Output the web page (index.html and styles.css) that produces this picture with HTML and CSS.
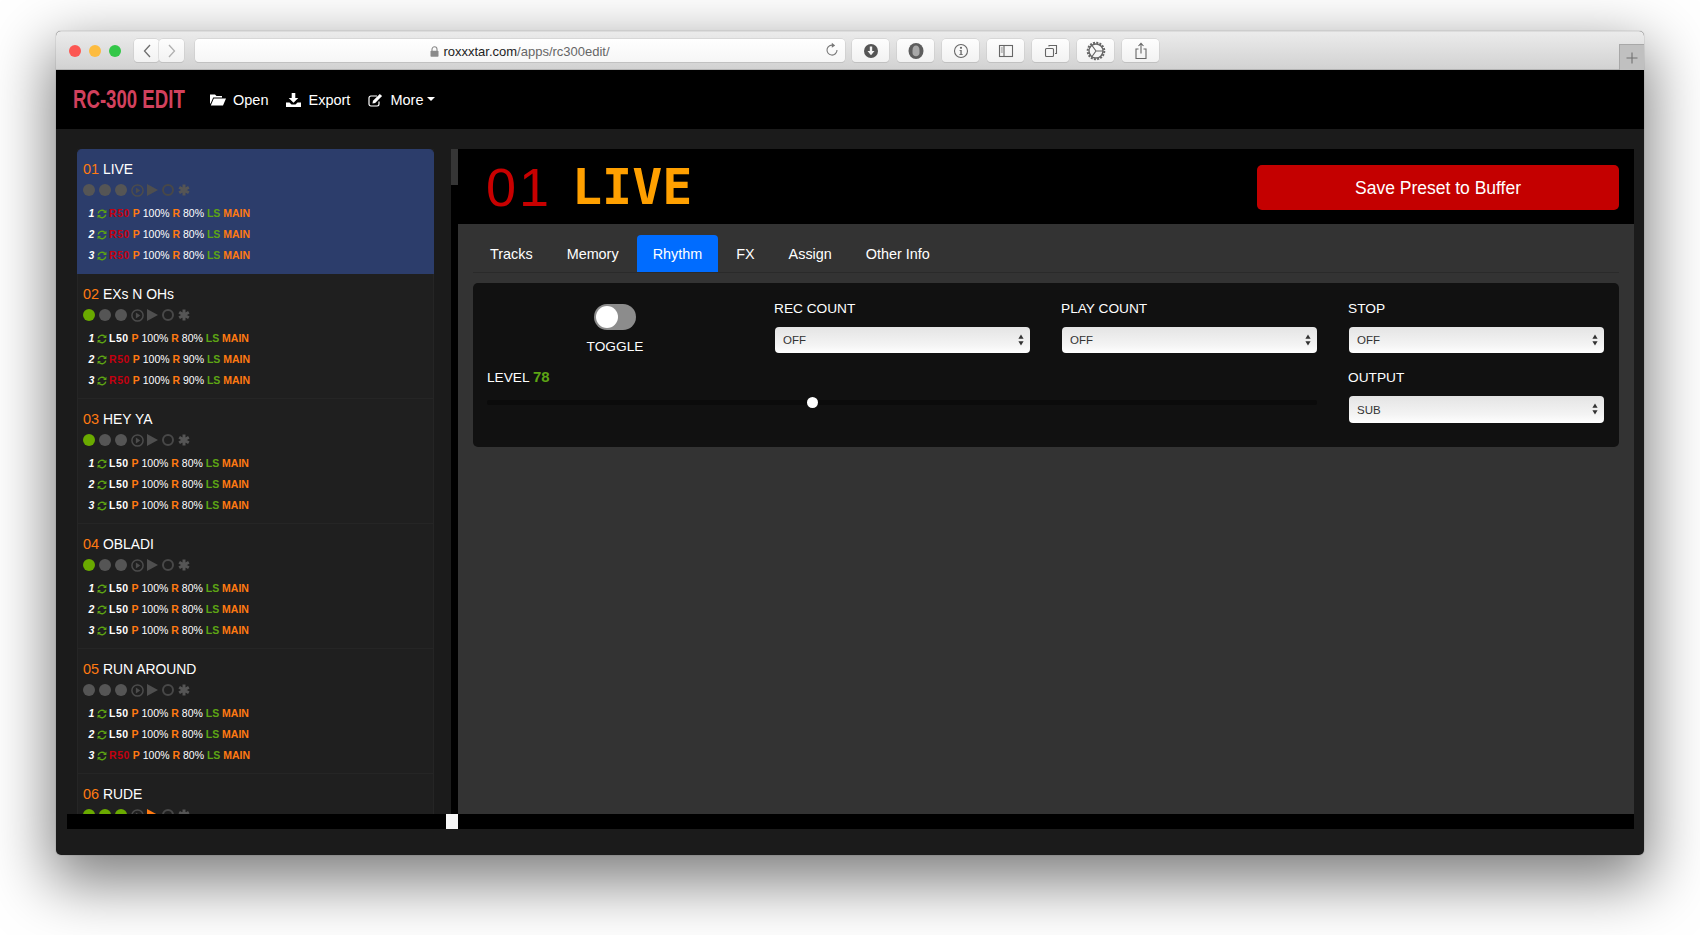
FILE: index.html
```html
<!DOCTYPE html>
<html lang="en">
<head>
<meta charset="utf-8">
<title>RC-300 Edit</title>
<link rel="stylesheet" href="styles.css">
</head>
<body>
<svg class="defs" width="0" height="0" aria-hidden="true">
  <symbol id="sync" viewBox="0 0 12 12">
    <path d="M1.4 5.2A4.7 4.7 0 0 1 9.4 3" fill="none" stroke="currentColor" stroke-width="1.7"/>
    <path d="M11.3 .8v4H7.3z" fill="currentColor"/>
    <path d="M10.6 6.8A4.7 4.7 0 0 1 2.6 9" fill="none" stroke="currentColor" stroke-width="1.7"/>
    <path d="M.7 11.2v-4h4z" fill="currentColor"/>
  </symbol>
  <symbol id="playc" viewBox="0 0 13 13">
    <circle cx="6.5" cy="6.5" r="5.6" fill="none" stroke="currentColor" stroke-width="1.5"/>
    <path d="M4.9 3.6l4.4 2.9-4.4 2.9z" fill="currentColor"/>
  </symbol>
  <symbol id="aster" viewBox="0 0 12 12">
    <path d="M6 .5v11M1.2 3.2l9.6 5.6M10.8 3.2l-9.6 5.6" fill="none" stroke="currentColor" stroke-width="3"/>
  </symbol>
  <symbol id="updown" viewBox="0 0 6 12">
    <path d="M3 .5L5.6 4.8H.4zM3 11.5L.4 7.2h5.2z" fill="currentColor"/>
  </symbol>
</svg>

<main class="window">
  <header class="titlebar">
    <div class="lights">
      <span class="light light-red"></span>
      <span class="light light-yellow"></span>
      <span class="light light-green"></span>
    </div>
    <div class="history">
      <span class="tool tool-hist">
        <svg width="10" height="16" viewBox="0 0 10 16"><path d="M8 2L2.5 8 8 14" fill="none" stroke="#6e6e6e" stroke-width="1.3"/></svg>
      </span>
      <span class="tool tool-hist">
        <svg width="10" height="16" viewBox="0 0 10 16"><path d="M2 2l5.500 6L2 14" fill="none" stroke="#b0b0b0" stroke-width="1.3"/></svg>
      </span>
    </div>
    <div class="urlbar">
      <span class="url-center">
        <svg class="lock" width="9" height="11" viewBox="0 0 9 11"><path d="M2 5V3.300a2.500 2.500 0 0 1 5 0V5" fill="none" stroke="#8a8a8a" stroke-width="1.100"/><rect x=".5" y="4.800" width="8" height="6" rx=".8" fill="#8a8a8a"/></svg>
        <span class="url-host">roxxxtar.com</span><span class="url-path">/apps/rc300edit/</span>
      </span>
      <svg class="reload" width="14" height="16" viewBox="0 0 14 16"><path d="M8.700 3.400A5 5 0 1 0 12 8" fill="none" stroke="#777" stroke-width="1.100"/><path d="M6.800 .8l3.400 2.600-3.400 2.300z" fill="#777"/></svg>
    </div>
    <div class="tools">
      <span class="tool">
        <svg width="16" height="16" viewBox="0 0 16 16"><circle cx="8" cy="8" r="7" fill="#555"/><path d="M6.800 3.500h2.400V8h2.300L8 12.300 4.500 8h2.300z" fill="#f4f4f4"/></svg>
      </span>
      <span class="tool">
        <svg width="18" height="18" viewBox="0 0 18 18"><ellipse cx="9" cy="9" rx="7.500" ry="8" fill="#5d5d5d"/><path d="M5.500 8.500c0-3.500 1.500-5 3.500-5s3.500 1.500 3.500 5v2.500c0 2-1.500 3.200-3.500 3.200s-3.500-1.200-3.500-3.200z" fill="#a8a8a8"/></svg>
      </span>
      <span class="tool">
        <svg width="16" height="16" viewBox="0 0 16 16"><circle cx="8" cy="8" r="6.500" fill="none" stroke="#666" stroke-width="1.100"/><circle cx="8" cy="4.800" r="1.100" fill="#666"/><path d="M6.500 7h2.200v4.200h1.100v.8H6.300v-.8h1.100V7.800H6.500z" fill="#666"/></svg>
      </span>
      <span class="tool">
        <svg width="16" height="14" viewBox="0 0 16 14"><rect x="1.500" y="1.500" width="13" height="11" fill="none" stroke="#666" stroke-width="1.100"/><path d="M6 1.500v11" stroke="#666" stroke-width="1.100"/><path d="M2.800 4h2M2.800 6h2M2.800 8h2" stroke="#888"/></svg>
      </span>
      <span class="tool">
        <svg width="14" height="14" viewBox="0 0 14 14"><rect x="1.500" y="4.500" width="8" height="8" rx="1" fill="none" stroke="#666" stroke-width="1.100"/><path d="M5 2.500V1.500h7.500v8h-1.500" fill="none" stroke="#666" stroke-width="1.100"/></svg>
      </span>
      <span class="tool">
        <svg width="20" height="20" viewBox="0 0 20 20"><circle cx="10" cy="10" r="7" fill="none" stroke="#666" stroke-width="1.400"/><circle cx="10" cy="10" r="8.300" fill="none" stroke="#666" stroke-width="2" stroke-dasharray="2 1.260"/><path d="M6 4.500L10 10H17M10 10L6 15.500" fill="none" stroke="#666" stroke-width="1.200"/></svg>
      </span>
      <span class="tool">
        <svg width="14" height="18" viewBox="0 0 14 18"><path d="M4.500 7H2v9.500h10V7H9.500" fill="none" stroke="#666" stroke-width="1.100"/><path d="M7 11.500V1.500M4.500 4L7 1.300 9.500 4" fill="none" stroke="#666" stroke-width="1.100"/></svg>
      </span>
    </div>
    <span class="newtab">
      <svg width="12" height="12" viewBox="0 0 12 12"><path d="M6 .5v11M.5 6h11" stroke="#707070" stroke-width="1.100"/></svg>
    </span>
  </header>

  <nav class="navbar">
    <span class="brand"><span class="brand-text">RC-300 EDIT</span></span>
    <a class="navlink">
      <svg width="16" height="13" viewBox="0 0 16 13"><path d="M0 1.500h5l1.500 1.500h5.500v1.500H3.200L.6 10.500H0zM3.800 5.500H16l-3 7H.8z" fill="#fff"/></svg>
      <span>Open</span>
    </a>
    <a class="navlink">
      <svg width="15" height="14" viewBox="0 0 15 14"><path d="M5.700 0h3.600v5h3L7.500 9.800 2.700 5h3z" fill="#fff"/><path d="M0 9.500h3.500l2 1.900h4l2-1.900H15V14H0z" fill="#fff"/></svg>
      <span>Export</span>
    </a>
    <a class="navlink">
      <svg width="15" height="14" viewBox="0 0 15 14"><path d="M11 8.500v2.600A1.900 1.900 0 0 1 9.100 13H2.900A1.900 1.900 0 0 1 1 11.100V4.900A1.900 1.900 0 0 1 2.900 3H9" fill="none" stroke="#fff" stroke-width="1.200"/><path d="M5 7.800L11.800.9l2.300 2.200-6.900 6.900-2.700.6z" fill="#fff"/></svg>
      <span>More</span>
      <i class="caret"></i>
    </a>
  </nav>

  <div class="workspace">
    <div class="panes">
      <aside class="presets">
        <article class="preset preset-active">
          <h3 class="preset-title"><b>01</b> LIVE</h3>
          <div class="status">
            <i class="dot"></i><i class="dot"></i><i class="dot"></i>
            <svg class="st-playc"><use href="#playc"/></svg><i class="tri"></i><i class="ring"></i><svg class="st-aster"><use href="#aster"/></svg>
          </div>
          <p class="track"><em>1</em> <svg class="sync"><use href="#sync"/></svg> <span class="red">R50</span> <span class="org">P</span> 100% <span class="org">R</span> 80% <span class="grn">LS</span> <span class="org">MAIN</span></p>
          <p class="track"><em>2</em> <svg class="sync"><use href="#sync"/></svg> <span class="red">R50</span> <span class="org">P</span> 100% <span class="org">R</span> 80% <span class="grn">LS</span> <span class="org">MAIN</span></p>
          <p class="track"><em>3</em> <svg class="sync"><use href="#sync"/></svg> <span class="red">R50</span> <span class="org">P</span> 100% <span class="org">R</span> 80% <span class="grn">LS</span> <span class="org">MAIN</span></p>
        </article>
        <article class="preset">
          <h3 class="preset-title"><b>02</b> EXs N OHs</h3>
          <div class="status">
            <i class="dot dot-on"></i><i class="dot"></i><i class="dot"></i>
            <svg class="st-playc"><use href="#playc"/></svg><i class="tri"></i><i class="ring"></i><svg class="st-aster"><use href="#aster"/></svg>
          </div>
          <p class="track"><em>1</em> <svg class="sync"><use href="#sync"/></svg> <span class="lft">L50</span> <span class="org">P</span> 100% <span class="org">R</span> 80% <span class="grn">LS</span> <span class="org">MAIN</span></p>
          <p class="track"><em>2</em> <svg class="sync"><use href="#sync"/></svg> <span class="red">R50</span> <span class="org">P</span> 100% <span class="org">R</span> 90% <span class="grn">LS</span> <span class="org">MAIN</span></p>
          <p class="track"><em>3</em> <svg class="sync"><use href="#sync"/></svg> <span class="red">R50</span> <span class="org">P</span> 100% <span class="org">R</span> 90% <span class="grn">LS</span> <span class="org">MAIN</span></p>
        </article>
        <article class="preset">
          <h3 class="preset-title"><b>03</b> HEY YA</h3>
          <div class="status">
            <i class="dot dot-on"></i><i class="dot"></i><i class="dot"></i>
            <svg class="st-playc"><use href="#playc"/></svg><i class="tri"></i><i class="ring"></i><svg class="st-aster"><use href="#aster"/></svg>
          </div>
          <p class="track"><em>1</em> <svg class="sync"><use href="#sync"/></svg> <span class="lft">L50</span> <span class="org">P</span> 100% <span class="org">R</span> 80% <span class="grn">LS</span> <span class="org">MAIN</span></p>
          <p class="track"><em>2</em> <svg class="sync"><use href="#sync"/></svg> <span class="lft">L50</span> <span class="org">P</span> 100% <span class="org">R</span> 80% <span class="grn">LS</span> <span class="org">MAIN</span></p>
          <p class="track"><em>3</em> <svg class="sync"><use href="#sync"/></svg> <span class="lft">L50</span> <span class="org">P</span> 100% <span class="org">R</span> 80% <span class="grn">LS</span> <span class="org">MAIN</span></p>
        </article>
        <article class="preset">
          <h3 class="preset-title"><b>04</b> OBLADI</h3>
          <div class="status">
            <i class="dot dot-on"></i><i class="dot"></i><i class="dot"></i>
            <svg class="st-playc"><use href="#playc"/></svg><i class="tri"></i><i class="ring"></i><svg class="st-aster"><use href="#aster"/></svg>
          </div>
          <p class="track"><em>1</em> <svg class="sync"><use href="#sync"/></svg> <span class="lft">L50</span> <span class="org">P</span> 100% <span class="org">R</span> 80% <span class="grn">LS</span> <span class="org">MAIN</span></p>
          <p class="track"><em>2</em> <svg class="sync"><use href="#sync"/></svg> <span class="lft">L50</span> <span class="org">P</span> 100% <span class="org">R</span> 80% <span class="grn">LS</span> <span class="org">MAIN</span></p>
          <p class="track"><em>3</em> <svg class="sync"><use href="#sync"/></svg> <span class="lft">L50</span> <span class="org">P</span> 100% <span class="org">R</span> 80% <span class="grn">LS</span> <span class="org">MAIN</span></p>
        </article>
        <article class="preset">
          <h3 class="preset-title"><b>05</b> RUN AROUND</h3>
          <div class="status">
            <i class="dot"></i><i class="dot"></i><i class="dot"></i>
            <svg class="st-playc"><use href="#playc"/></svg><i class="tri"></i><i class="ring"></i><svg class="st-aster"><use href="#aster"/></svg>
          </div>
          <p class="track"><em>1</em> <svg class="sync"><use href="#sync"/></svg> <span class="lft">L50</span> <span class="org">P</span> 100% <span class="org">R</span> 80% <span class="grn">LS</span> <span class="org">MAIN</span></p>
          <p class="track"><em>2</em> <svg class="sync"><use href="#sync"/></svg> <span class="lft">L50</span> <span class="org">P</span> 100% <span class="org">R</span> 80% <span class="grn">LS</span> <span class="org">MAIN</span></p>
          <p class="track"><em>3</em> <svg class="sync"><use href="#sync"/></svg> <span class="red">R50</span> <span class="org">P</span> 100% <span class="org">R</span> 80% <span class="grn">LS</span> <span class="org">MAIN</span></p>
        </article>
        <article class="preset">
          <h3 class="preset-title"><b>06</b> RUDE</h3>
          <div class="status">
            <i class="dot dot-on"></i><i class="dot dot-on"></i><i class="dot dot-on"></i>
            <svg class="st-playc"><use href="#playc"/></svg><i class="tri tri-on"></i><i class="ring"></i><svg class="st-aster"><use href="#aster"/></svg>
          </div>
        </article>
      </aside>
      <div class="vscroll"><div class="vthumb"></div></div>
      <section class="editor">
        <div class="head">
          <span class="seg">01</span>
          <h1 class="name">LIVE</h1>
          <button class="save">Save Preset to Buffer</button>
        </div>
        <div class="body">
          <ul class="tabs">
            <li class="tab">Tracks</li>
            <li class="tab">Memory</li>
            <li class="tab tab-active">Rhythm</li>
            <li class="tab">FX</li>
            <li class="tab">Assign</li>
            <li class="tab">Other Info</li>
          </ul>
          <div class="card">
            <div class="card-left">
              <div class="card-row">
                <div class="toggle-col">
                  <span class="switch"><i class="knob"></i></span>
                  <span class="label">TOGGLE</span>
                </div>
                <div class="field">
                  <label class="label">REC COUNT</label>
                  <div class="select"><select><option>OFF</option></select><svg class="updown"><use href="#updown"/></svg></div>
                </div>
                <div class="field">
                  <label class="label">PLAY COUNT</label>
                  <div class="select"><select><option>OFF</option></select><svg class="updown"><use href="#updown"/></svg></div>
                </div>
              </div>
              <div class="level">
                <span class="label">LEVEL <b class="grn">78</b></span>
                <div class="slider"><i class="thumb"></i></div>
              </div>
            </div>
            <div class="card-right">
              <div class="field">
                <label class="label">STOP</label>
                <div class="select"><select><option>OFF</option></select><svg class="updown"><use href="#updown"/></svg></div>
              </div>
              <div class="field">
                <label class="label">OUTPUT</label>
                <div class="select select-tall"><select><option>SUB</option></select><svg class="updown"><use href="#updown"/></svg></div>
              </div>
            </div>
          </div>
        </div>
      </section>
    </div>
    <div class="hscroll"><i class="hcorner"></i></div>
  </div>
</main>
</body>
</html>
```

FILE: styles.css
```css
* { box-sizing: border-box; }
html, body { margin: 0; height: 100%; }
body {
  background: #fff;
  font-family: "Liberation Sans", Arial, sans-serif;
  overflow: hidden;
  padding: 31px 56px 0;
}
.defs { display: block; height: 0; }

.window {
  width: 1588px;
  height: 824px;
  border-radius: 5px;
  background: #1b1b1b;
  box-shadow: 0 22px 60px 6px rgba(0, 0, 0, .5), 0 0 0 1px rgba(0, 0, 0, .06);
  display: flex;
  flex-direction: column;
  overflow: hidden;
}

/* browser chrome */
.titlebar {
  height: 39px;
  flex: none;
  display: flex;
  align-items: flex-start;
  background: linear-gradient(#ebebeb, #d2d2d2);
  border-top: 1px solid #dcdcdc;
  border-bottom: 1px solid #b4b4b4;
  padding: 7px 0 0 13px;
}
.lights { display: flex; gap: 8px; padding-top: 6px; }
.light { width: 12px; height: 12px; border-radius: 50%; }
.light-red { background: #fc5753; }
.light-yellow { background: #fdbc40; }
.light-green { background: #33c748; }
.history { display: flex; margin-left: 13px; gap: 0; }
.tool {
  width: 37px;
  height: 23px;
  background: linear-gradient(#fdfdfd, #f2f2f2);
  border-radius: 4px;
  box-shadow: 0 0 0 .5px #c8c8c8, 0 1px 0 #bbb;
  display: flex;
  align-items: center;
  justify-content: center;
}
.tool-hist { width: 25px; }
.urlbar {
  width: 650px;
  height: 23px;
  margin-left: 11px;
  background: linear-gradient(#fff, #f6f6f6);
  border-radius: 4px;
  box-shadow: 0 0 0 .5px #c8c8c8, 0 1px 0 #bbb;
  display: flex;
  align-items: center;
  justify-content: center;
  padding-top: 1px;
  position: relative;
}
.url-center { display: flex; align-items: center; font-size: 13px; }
.lock { margin-right: 4px; }
.url-host { color: #222; }
.url-path { color: #666; }
.reload { position: absolute; right: 6px; top: 3px; }
.tools { display: flex; gap: 8px; margin-left: 7px; }
.newtab {
  width: 25px;
  height: 26px;
  margin-left: auto;
  margin-top: 5px;
  background: #c0c0c0;
  border-left: 1px solid #a8a8a8;
  border-top: 1px solid #a8a8a8;
  display: flex;
  align-items: center;
  justify-content: center;
}

/* navbar */
.navbar {
  height: 59px;
  flex: none;
  background: #000;
  display: flex;
  align-items: center;
  padding-left: 17px;
  color: #fff;
}
.brand {
  font-weight: 700;
  font-size: 25px;
  color: #d2415d;
  width: 137px;
  white-space: nowrap;
}
.brand-text {
  display: inline-block;
  transform: scaleX(.745);
  transform-origin: left center;
}
.navlink {
  display: flex;
  align-items: center;
  font-size: 14.500px;
  margin-right: 18px;
}
.navlink svg { margin-right: 7px; }
.caret {
  width: 0;
  height: 0;
  margin-left: 4px;
  margin-top: -2px;
  border-top: 4px solid #fff;
  border-left: 4px solid transparent;
  border-right: 4px solid transparent;
}

/* app layout */
.workspace {
  flex: 1;
  min-height: 0;
  display: flex;
  flex-direction: column;
  padding: 20px 10px 26px 11px;
}
.panes { flex: 1; min-height: 0; display: flex; }
.presets {
  width: 357px;
  margin-left: 10px;
  flex: none;
  overflow: hidden;
  background: #1f1f1f;
}
.preset {
  height: 125px;
  padding: 11px 5px 0;
  border: 1px solid #252525;
  border-top: 0;
}
.preset-active {
  background: #2c3d6b;
  border-color: #2c3d6b;
  border-radius: 5px 5px 0 0;
}
.preset-title {
  margin: 0;
  font-size: 13.900px;
  font-weight: 400;
  line-height: 18px;
  color: #fff;
}
.preset-title b { color: #ff7a12; font-weight: 400; font-size: 14.500px; }
.status {
  display: flex;
  align-items: center;
  height: 14px;
  margin-top: 5px;
  color: #555;
}
.dot {
  width: 12px;
  height: 12px;
  border-radius: 50%;
  background: #555;
  margin-right: 4px;
}
.dot-on { background: #6aaa00; }
.st-playc { width: 13px; height: 13px; margin-right: 3px; color: #4c4c4c; }
.tri {
  width: 0;
  height: 0;
  border-left: 11px solid #4f4f4f;
  border-top: 6px solid transparent;
  border-bottom: 6px solid transparent;
  margin-right: 4px;
}
.tri-on { border-left-color: #ff7a12; }
.ring {
  width: 12px;
  height: 12px;
  border-radius: 50%;
  border: 2px solid #484848;
  margin-right: 4px;
}
.st-aster { width: 12px; height: 12px; color: #555; }
.track {
  margin: 0;
  padding-left: 5.400px;
  height: 21px;
  line-height: 21px;
  font-size: 10.500px;
  font-weight: 400;
  color: #fff;
  white-space: nowrap;
}
.status + .track { margin-top: 6px; }
.track em { font-weight: 700; }
.sync { width: 10px; height: 10px; color: #5da514; vertical-align: -1.500px; margin-right: -1px; }
.track .org, .track .grn, .track .red, .track .lft { font-weight: 700; }
.track .red, .track .lft { letter-spacing: .5px; }
.red { color: #c40010; }
.org { color: #ff7a12; }
.grn { color: #5da514; }

.vscroll { width: 7px; margin-left: 17px; background: #000; flex: none; }
.vthumb { height: 36px; background: #363636; }

.editor { flex: 1; min-width: 0; background: #333; display: flex; flex-direction: column; }
.head {
  height: 75px;
  flex: none;
  background: #000;
  display: flex;
  align-items: center;
  padding: 0 15px 0 28px;
}
.seg {
  font-size: 54px;
  line-height: 1;
  color: #c80000;
  letter-spacing: 3px;
  width: 90px;
}
.name {
  margin: 0 0 0 -4px;
  font-family: "DejaVu Sans Mono", monospace;
  font-size: 50px;
  font-weight: 700;
  line-height: 1;
  color: #ffa000;
}
.save {
  margin: 2px 0 0 auto;
  width: 362px;
  height: 45px;
  border: 0;
  border-radius: 5px;
  background: #c40000;
  color: #fff;
  font: 400 17.500px "Liberation Sans", sans-serif;
  padding-top: 2px;
}
.body { flex: 1; padding: 11px 15px 0; }
.tabs {
  list-style: none;
  margin: 0;
  padding: 0 0 0 1px;
  display: flex;
  gap: 2px;
  height: 38px;
  border-bottom: 1px solid #2a2a2a;
}
.tab {
  padding: 1px 16px 0;
  line-height: 36px;
  height: 37px;
  font-size: 14.400px;
  color: #fff;
  border-radius: 4px 4px 0 0;
}
.tab-active { background: #006cff; }
.card {
  margin-top: 10px;
  height: 164px;
  background: #111;
  border-radius: 5px;
  padding: 15px 15px 0 14px;
  display: flex;
  gap: 31px;
}
.card-left { width: 830px; flex: none; }
.card-row { display: flex; gap: 31px; }
.card-right { width: 256px; flex: none; }
.toggle-col {
  width: 256px;
  flex: none;
  display: flex;
  flex-direction: column;
  align-items: center;
  padding-top: 6px;
}
.switch {
  width: 42px;
  height: 26px;
  border-radius: 13px;
  background: #8c8c8c;
  padding: 2px;
  margin-bottom: 6px;
  display: block;
}
.knob { display: block; width: 22px; height: 22px; border-radius: 50%; background: #fff; }
.label { display: block; font-size: 13.700px; line-height: 20px; padding-top: 1px; color: #fff; }
.label .grn { font-weight: 700; font-size: 15px; }
.field { width: 256px; flex: none; }
.card-right .field + .field { margin-top: 14px; }
.select { position: relative; margin: 8px 0 0 1px; height: 26px; }
.select-tall { height: 27px; }
.select select {
  appearance: none;
  -webkit-appearance: none;
  display: block;
  width: 100%;
  height: 100%;
  border: 0;
  border-radius: 4px;
  background: linear-gradient(#e4e4e4, #f4f4f4 70%, #fff);
  color: #333;
  font: 11.500px "Liberation Sans", sans-serif;
  padding: 0 8px;
}
.updown { position: absolute; right: 6px; top: 7px; width: 6px; height: 12px; color: #333; }
.level { margin-top: 9px; }
.slider {
  position: relative;
  height: 5px;
  margin-top: 12px;
  background: #0b0b0b;
  border-radius: 2px;
}
.thumb {
  position: absolute;
  left: 320px;
  top: -3px;
  width: 11px;
  height: 11px;
  border-radius: 50%;
  background: #fff;
}

.hscroll { height: 15px; flex: none; background: #000; padding-left: 379px; }
.hcorner { display: block; width: 12px; height: 15px; background: #f6f6f6; }
```
